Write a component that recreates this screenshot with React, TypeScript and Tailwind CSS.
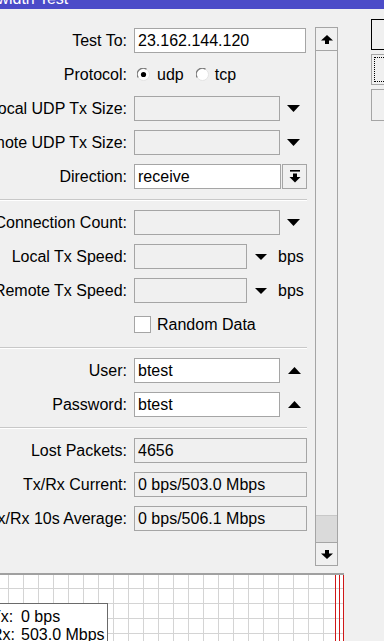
import type { ReactNode } from 'react';

const font = "font-['Liberation_Sans',Arial,sans-serif]";

function DownTri({ w = 13, h = 7 }: { w?: number; h?: number }) {
  return (
    <svg width={w} height={h} viewBox={`0 0 ${w} ${h}`} className="shrink-0">
      <polygon points={`0,0 ${w},0 ${w / 2},${h}`} fill="#000" />
    </svg>
  );
}

function UpTri() {
  return (
    <svg width={13} height={7} viewBox="0 0 13 7" className="shrink-0">
      <polygon points="0,7 13,7 6.5,0" fill="#000" />
    </svg>
  );
}

function Radio({ checked }: { checked?: boolean }) {
  return (
    <svg width={13} height={13} viewBox="0 0 13 13" className="shrink-0">
      <circle cx="6.5" cy="6.5" r="6" fill="#fff" stroke="#e3e3e3" />
      <path d="M1.2 9.5 A6 6 0 0 1 9.5 1.2" fill="none" stroke="#7a7a7a" strokeWidth="1.2" />
      {checked && <circle cx="6.5" cy="6.5" r="2.6" fill="#000" />}
    </svg>
  );
}

function Row({ label, children }: { label: string; children: ReactNode }) {
  return (
    <div className="flex h-[25px] items-center">
      <div className="flex w-[127px] shrink-0 justify-end whitespace-nowrap">{label}</div>
      <div className="ml-[7px] flex items-center">{children}</div>
    </div>
  );
}

function Field({ value, width, white }: { value?: string; width: string; white?: boolean }) {
  return (
    <div
      className={`h-[25px] ${width} border border-[#a5a5a5] px-[3px] leading-[23px] whitespace-nowrap overflow-hidden ${
        white ? 'bg-white' : 'bg-[#f0f0f0]'
      }`}
    >
      {value}
    </div>
  );
}

function Separator() {
  return <div className="mt-[10px] mb-[9px] h-px w-[307px] bg-[#c8c8c8] border-b border-white box-content" />;
}

export default function App() {
  return (
    <div className={`relative h-[641px] w-[384px] overflow-hidden bg-[#f0f0f0] text-[16px] text-black ${font}`}>
      {/* title bar */}
      <div className="h-[9px] overflow-hidden bg-[#4b4bc8]">
        <div className="-mt-[10px] -ml-[40px] whitespace-nowrap text-[16px] leading-[18px] text-white">
          Bandwidth Test
        </div>
      </div>

      <div className="flex h-[564px]">
        {/* form */}
        <div className="w-[307px] shrink-0 pt-[19px]">
          <div className="flex flex-col gap-[9px]">
            <Row label="Test To:">
              <Field value="23.162.144.120" width="w-[172px]" white />
            </Row>
            <Row label="Protocol:">
              <div className="ml-[3px] flex items-center">
                <Radio checked />
                <span className="ml-[7px]">udp</span>
                <div className="ml-[12px]">
                  <Radio />
                </div>
                <span className="ml-[6px]">tcp</span>
              </div>
            </Row>
            <Row label="Local UDP Tx Size:">
              <Field width="w-[146px]" />
              <div className="ml-[7px]">
                <DownTri />
              </div>
            </Row>
            <Row label="Remote UDP Tx Size:">
              <Field width="w-[146px]" />
              <div className="ml-[7px]">
                <DownTri />
              </div>
            </Row>
            <Row label="Direction:">
              <Field value="receive" width="w-[147px]" white />
              <div className="ml-px flex h-[25px] w-[25px] items-center justify-center border border-[#a5a5a5] bg-[#f0f0f0]">
                <svg width="12" height="13" viewBox="0 0 12 13">
                  <rect x="1" y="0" width="10" height="1.6" fill="#000" />
                  <rect x="4" y="3.5" width="4" height="4" fill="#000" />
                  <polygon points="0.5,7 11.5,7 6,12.5" fill="#000" />
                </svg>
              </div>
            </Row>
          </div>

          <Separator />

          <div className="flex flex-col gap-[9px]">
            <Row label="Connection Count:">
              <Field width="w-[146px]" />
              <div className="ml-[7px]">
                <DownTri />
              </div>
            </Row>
            <Row label="Local Tx Speed:">
              <Field width="w-[113px]" />
              <div className="ml-[8px]">
                <DownTri w={12} h={6} />
              </div>
              <span className="ml-[11px]">bps</span>
            </Row>
            <Row label="Remote Tx Speed:">
              <Field width="w-[113px]" />
              <div className="ml-[8px]">
                <DownTri w={12} h={6} />
              </div>
              <span className="ml-[11px]">bps</span>
            </Row>
            <div className="flex h-[25px] items-center pl-[134px]">
              <div className="h-[17px] w-[17px] border border-[#a5a5a5] bg-white" />
              <span className="ml-[6px]">Random Data</span>
            </div>
          </div>

          <Separator />

          <div className="flex flex-col gap-[9px]">
            <Row label="User:">
              <Field value="btest" width="w-[146px]" white />
              <div className="ml-[8px]">
                <UpTri />
              </div>
            </Row>
            <Row label="Password:">
              <Field value="btest" width="w-[146px]" white />
              <div className="ml-[8px]">
                <UpTri />
              </div>
            </Row>
          </div>

          <Separator />

          <div className="flex flex-col gap-[9px]">
            <Row label="Lost Packets:">
              <Field value="4656" width="w-[173px]" />
            </Row>
            <Row label="Tx/Rx Current:">
              <Field value="0 bps/503.0 Mbps" width="w-[173px]" />
            </Row>
            <Row label="Tx/Rx 10s Average:">
              <Field value="0 bps/506.1 Mbps" width="w-[173px]" />
            </Row>
          </div>
        </div>

        {/* scrollbar */}
        <div className="ml-[8px] mt-[18px] flex h-[539px] w-[23px] shrink-0 flex-col border border-[#a5a5a5] bg-[#f0f0f0]">
          <div className="flex h-[23px] items-center justify-center border-b border-[#a5a5a5]">
            <svg width="12" height="9" viewBox="0 0 12 9">
              <polygon points="0,5.5 12,5.5 6,0" fill="#000" />
              <rect x="4" y="5" width="4" height="4" fill="#000" />
            </svg>
          </div>
          <div className="flex-1" />
          <div className="h-[27px] border-t border-[#c8c8c8] bg-[#dadada]" />
          <div className="flex h-[23px] items-center justify-center border-t border-[#a5a5a5]">
            <svg width="12" height="9" viewBox="0 0 12 9">
              <rect x="4" y="0" width="4" height="4" fill="#000" />
              <polygon points="0,3.5 12,3.5 6,9" fill="#000" />
            </svg>
          </div>
        </div>

        {/* buttons */}
        <div className="ml-[33px] mt-[10px] flex shrink-0 flex-col gap-[4px]">
          <button className="h-[31px] w-[100px] border border-black bg-[#f0f0f0] pl-[40px] text-left">Start</button>
          <button className="h-[31px] w-[100px] border border-[#a5a5a5] bg-[#f0f0f0] p-[2px]">
            <div className="h-full w-full border border-dotted border-black pl-[36px] text-left">Stop</div>
          </button>
          <button className="h-[32px] w-[100px] border border-[#a5a5a5] bg-[#f0f0f0] pl-[40px] text-left">Close</button>
        </div>
      </div>

      {/* graph */}
      <div className="relative h-[68px] w-[344px] border-t-2 border-[#a0a0a0] bg-white">
        <svg width="344" height="66" viewBox="0 0 344 66" className="block">
          {Array.from({ length: 22 }).map((_, i) => (
            <line key={'v' + i} x1={8.5 + i * 15} y1="0" x2={8.5 + i * 15} y2="66" stroke="#d4d4d4" />
          ))}
          {[13, 28, 43, 58].map((y) => (
            <line key={'h' + y} x1="0" y1={y + 0.5} x2="344" y2={y + 0.5} stroke="#d4d4d4" />
          ))}
          {[335, 339, 343].map((x) => (
            <line key={'r' + x} x1={x + 0.5} y1="0" x2={x + 0.5} y2="66" stroke="#d01818" />
          ))}
        </svg>
        <div className="absolute -left-[18px] top-[28px] w-[126px] whitespace-nowrap border border-[#6a6a6a] bg-white pl-[8px] pt-[4px] leading-[18px]">
          <div className="flex">
            <span className="w-[30px] shrink-0">Tx:</span>
            <span>0 bps</span>
          </div>
          <div className="flex">
            <span className="w-[30px] shrink-0">Rx:</span>
            <span>503.0 Mbps</span>
          </div>
        </div>
      </div>
    </div>
  );
}
